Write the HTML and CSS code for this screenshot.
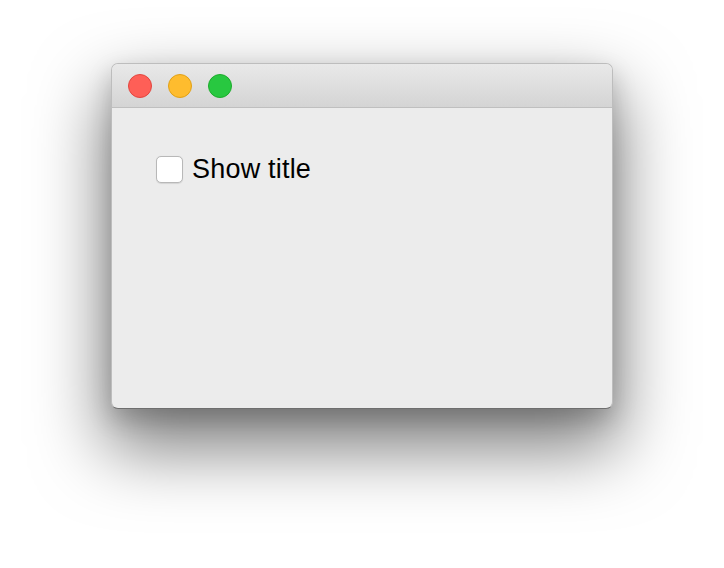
FILE: index.html
```html
<!DOCTYPE html>
<html lang="en">
  <head>
    <meta charset="UTF-8" />
    <meta name="viewport" content="width=device-width, initial-scale=1.0" />
    <title>Show title</title>
    <link rel="stylesheet" href="styles.css">
  </head>
  <body>
    <div class="window">
      <!-- Title bar -->
      <div class="titlebar">
        <span class="light close"></span>
        <span class="light minimize"></span>
        <span class="light zoom"></span>
      </div>

      <!-- Content -->
      <div class="content">
        <label class="check" for="show-title">
          <input type="checkbox" id="show-title" />
          <span class="box"></span>
          Show title
        </label>
      </div>
    </div>
  </body>
</html>
```

FILE: styles.css
```css
/* General Styles */
body {
  margin: 0;
  padding: 63px 0 0 111px;
  background: #fff;
  font-family: "Liberation Sans", Arial, sans-serif;
  min-height: 100vh;
  box-sizing: border-box;
}

.window {
  width: 502px;
  height: 346px;
  border-radius: 7px;
  border: 1px solid #bdbdbd;
  border-bottom-color: #6e6e6e;
  box-sizing: border-box;
  background-color: #ececec;
  overflow: hidden;
  box-shadow: 0 34px 70px 6px rgba(0, 0, 0, 0.5), 0 10px 24px rgba(0, 0, 0, 0.18);
}

.titlebar {
  height: 44px;
  box-sizing: border-box;
  display: flex;
  align-items: center;
  gap: 16px;
  padding: 0 0 0 16px;
  background: linear-gradient(to bottom, #e9e9e9 0%, #d4d4d4 100%);
  border-bottom: 1px solid #bfbfbf;
}

.light {
  width: 24px;
  height: 24px;
  border-radius: 50%;
  box-sizing: border-box;
}

.close {
  background-color: #fe5f57;
  border: 1px solid #e2463f;
}

.minimize {
  background-color: #febc2e;
  border: 1px solid #e1a116;
}

.zoom {
  background-color: #28c840;
  border: 1px solid #1dac2c;
}

.content {
  padding: 46px 0 0 44px;
}

.check {
  display: flex;
  align-items: center;
  gap: 9px;
  font-size: 27px;
  letter-spacing: 0.2px;
  color: #000;
}

.check input {
  display: none;
}

.check .box {
  width: 27px;
  height: 27px;
  box-sizing: border-box;
  border-radius: 5px;
  background-color: #fff;
  border: 1px solid #b8b8b8;
  box-shadow: 0 0.5px 1px rgba(0, 0, 0, 0.1);
}
```
